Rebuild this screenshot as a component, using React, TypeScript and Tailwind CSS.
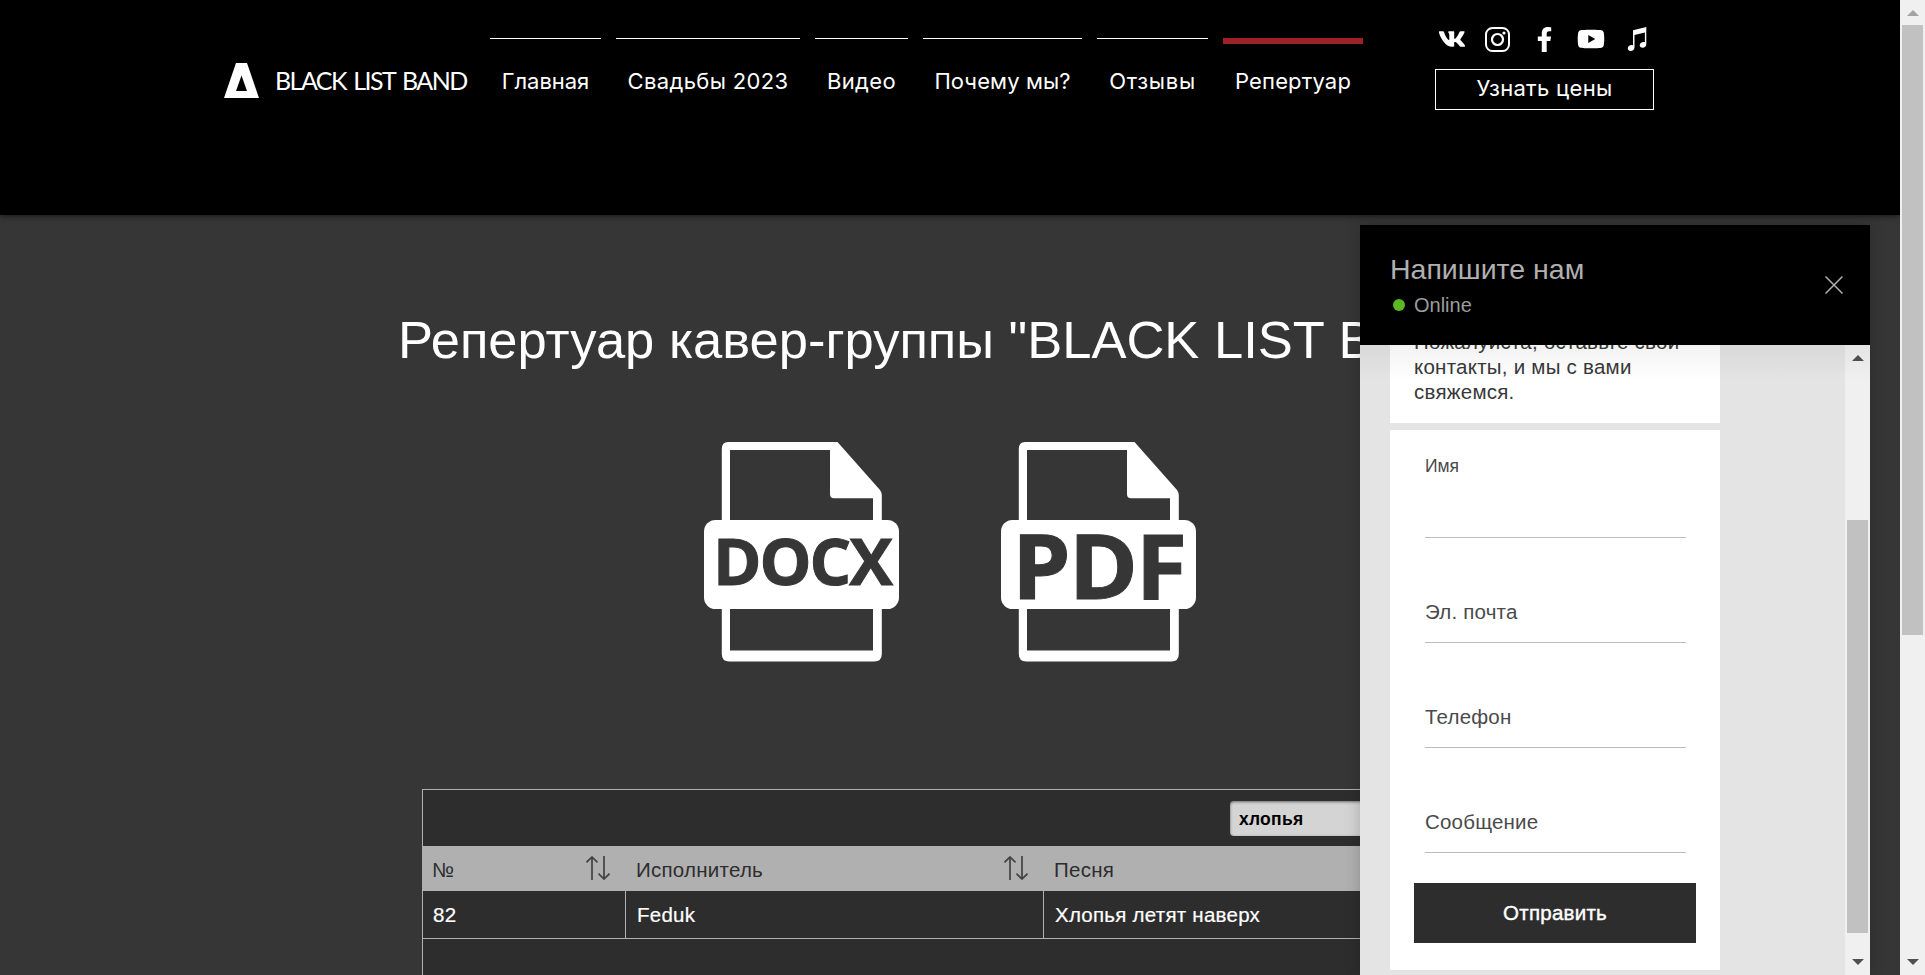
import React from "react";
import { FaFacebookF, FaVk, FaYoutube } from "react-icons/fa";

type NavItem = { label: string; box: string; text: string; active?: boolean };

const NAV: NavItem[] = [
  { label: "Главная", box: "w-[111px]", text: "tracking-[-0.05px]" },
  { label: "Свадьбы 2023", box: "w-[184px]", text: "tracking-[0.35px]" },
  { label: "Видео", box: "w-[93px]", text: "tracking-[0.4px]" },
  { label: "Почему мы?", box: "w-[159px]", text: "tracking-[0.1px]" },
  { label: "Отзывы", box: "w-[111px]", text: "tracking-[0.7px]" },
  { label: "Репертуар", box: "w-[140px]", text: "tracking-[0.15px]", active: true },
];

function Logo() {
  return (
    <svg className="mt-[63px] h-[35px] w-[35px] shrink-0" viewBox="0 0 35 35">
      <path fill="#fff" fillRule="evenodd" d="M12 0h11l12 35H0zM17.5 12.5L12 28h11z" />
    </svg>
  );
}

function InstagramIcon() {
  return (
    <svg className="h-[25px] w-[25px]" viewBox="0 0 25 25" fill="none" stroke="#fff">
      <rect x="1" y="1" width="23" height="23" rx="6.500" strokeWidth="2" />
      <circle cx="12.500" cy="12.500" r="5.500" strokeWidth="2.200" />
      <circle cx="19" cy="6" r="1.600" fill="#fff" stroke="none" />
    </svg>
  );
}

function MusicIcon() {
  return (
    <svg className="h-6 w-[20px]" viewBox="0 0 20 24">
      <path
        fill="#fff"
        d="M6 3.2L19.3 0v17.2c0 2-1.7 3.6-3.7 3.6-1.700 0-2.900-1-2.900-2.500 0-1.900 1.700-3.300 3.700-3.300.6 0 1.100.1 1.500.3V5.600L7.500 8v12.200c0 2.100-1.700 3.700-3.800 3.700-1.700 0-2.900-1-2.900-2.500 0-1.900 1.700-3.300 3.700-3.300.6 0 1.100.1 1.500.3z"
      />
    </svg>
  );
}

function SortIcon() {
  return (
    <svg className="h-6 w-6" viewBox="0 0 24 24" fill="none" stroke="#424242" strokeWidth="1.7">
      <path d="M6 24V1M.5 6.300L6 1l5.500 5.300M18 0v23M12.500 17.700L18 23l5.500-5.300" />
    </svg>
  );
}

function FileIcon({ label, x, y, width, size }: { label: string; x: number; y: number; width: number; size: number }) {
  return (
    <svg className="h-[220px] w-[195px]" viewBox="0 0 195 220">
      <path
        fill="#fff"
        fillRule="evenodd"
        d="M24 0h109.500L176 48q1.800 2.500 1.800 5.500V212q0 7.500-7.500 7.500h-145q-7.500 0-7.500-7.500V7q0-7 6.200-7zM26 8v70h143V56.300h-39q-4 0-4-4V8zM26 167v41.500h143V167z"
      />
      <rect y="78" width="195" height="89" rx="11.500" fill="#fff" />
      <text
        x={x}
        y={y}
        fontSize={size}
        textLength={width}
        lengthAdjust="spacingAndGlyphs"
        letterSpacing="-2"
        fill="#363636"
        stroke="#363636"
        strokeWidth="1"
        fontWeight="700"
        fontFamily="'Open Sans', 'Noto Sans', sans-serif"
      >
        {label}
      </text>
    </svg>
  );
}

function Arrow({ down, muted }: { down?: boolean; muted?: boolean }) {
  return (
    <svg className="h-[6px] w-[12px]" viewBox="0 0 12 6">
      <path fill={muted ? "#a3a3a3" : "#505050"} d={down ? "M0 0h12L6 6z" : "M0 6h12L6 0z"} />
    </svg>
  );
}

function Field({ label, first }: { label: string; first?: boolean }) {
  return first ? (
    <div className="h-[108px] border-b border-[#bdbdbd] pt-[24px]">
      <div className="text-[17.5px] leading-6 text-[#4a4a4a]">{label}</div>
    </div>
  ) : (
    <div className="flex h-[105px] items-end border-b border-[#bdbdbd] pb-[18px]">
      <div className="text-[20.5px] leading-6 tracking-[0.2px] text-[#4a4a4a]">{label}</div>
    </div>
  );
}

function ChatPanel() {
  return (
    <aside className="absolute left-[1360px] top-[225px] flex h-[750px] w-[510px] flex-col shadow-[0_0_15px_rgba(0,0,0,0.2)]">
      <div className="flex h-[120px] shrink-0 justify-between bg-black pl-[30px] pr-[27px] text-[#b0b0b0]">
        <div className="pt-[28px]">
          <div className="text-[28.5px] leading-8">Напишите нам</div>
          <div className="flex items-center pl-[3px] pt-[8px]">
            <span className="h-3 w-3 rounded-full bg-[#5ab923]" />
            <span className="pl-[9px] text-[20px] leading-6 text-[#9c9c9c]">Online</span>
          </div>
        </div>
        <svg className="mt-[51px] h-[18px] w-[18px]" viewBox="0 0 18 18" stroke="#b0b0b0" strokeWidth="1.500">
          <path d="M.5.5l17 17M17.500.5l-17 17" />
        </svg>
      </div>
      <div className="relative flex h-[630px] overflow-hidden bg-[#e4e4e4]">
        <div className="w-[485px] pl-[30px]">
          <div className="h-[78px] w-[330px] overflow-hidden bg-white pl-6">
            <p className="-mt-[16px] whitespace-nowrap text-[20.5px] leading-[25px] tracking-[0.25px] text-[#383838]">
              Пожалуйста, оставьте свои
              <br />
              контакты, и мы с вами
              <br />
              свяжемся.
            </p>
          </div>
          <form className="mt-[7px] h-[540px] w-[330px] bg-white px-6">
            <div className="pl-[11px] pr-[10px]">
              <Field label="Имя" first />
              <Field label="Эл. почта" />
              <Field label="Телефон" />
              <Field label="Сообщение" />
            </div>
            <button
              type="button"
              className="mt-[30px] block h-[60px] w-[282px] bg-[#2d2d2d] text-[20.5px] leading-[60px] tracking-[0.25px] text-white [-webkit-text-stroke:0.4px_#fff]"
            >
              Отправить
            </button>
          </form>
        </div>
        <div className="flex w-[25px] flex-col items-center bg-[#f0f0f0] pt-[10px]">
          <Arrow />
          <div className="mt-[159px] h-[413px] w-[21px] bg-[#c1c1c1]" />
          <div className="mt-[26px] flex">
            <Arrow down />
          </div>
        </div>
        <div className="absolute inset-x-0 top-0 h-9 bg-gradient-to-b from-black/5 to-transparent" />
      </div>
    </aside>
  );
}

export default function App() {
  return (
    <div className="relative flex h-[975px] w-[1925px] overflow-hidden bg-[#363636] font-['Liberation_Sans',Arial,sans-serif]">
      <div className="flex w-[1900px] flex-col">
        <header className="z-10 flex h-[215px] shrink-0 bg-black pl-[224px] text-white shadow-[0_1px_6px_rgba(0,0,0,0.6)]">
          <Logo />
          <div className="w-[231px] whitespace-nowrap pl-[16px] pt-[65px] font-['Lato',sans-serif] text-[25px] leading-[30px] tracking-[-1.55px] [word-spacing:2.5px]">
            BLACK LIST BAND
          </div>
          <nav className="flex gap-[15px] pt-[38px] font-['Inter',sans-serif]">
            {NAV.map((item) => (
              <a key={item.label} className={item.box}>
                <div className={item.active ? "h-[6px] bg-[#9e2126]" : "mb-[5px] h-px bg-white"} />
                <div className={"flex justify-center whitespace-nowrap pt-[22px] text-[22px] leading-[30px] " + item.text}>
                  {item.label}
                </div>
              </a>
            ))}
          </nav>
          <div className="ml-[72px] pt-[27px]">
            <div className="flex h-6 items-center pl-[3px]">
              <FaVk className="h-[28px] w-[28px]" />
              <span className="ml-[19px]">
                <InstagramIcon />
              </span>
              <FaFacebookF className="ml-[22px] h-[25px] w-[25px]" />
              <FaYoutube className="ml-[20px] h-[28px] w-[28px]" />
              <span className="ml-[22px]">
                <MusicIcon />
              </span>
            </div>
            <a className="mt-[18px] flex h-[41px] w-[219px] justify-center border border-white pt-[3px] font-['Inter',sans-serif] text-[22px] leading-[30px] tracking-[0.3px]">
              Узнать цены
            </a>
          </div>
        </header>
        <main className="flex flex-col items-center text-white">
          <h1 className="ml-[1px] mt-[95px] whitespace-nowrap text-[52.5px] leading-[60px]">Репертуар кавер-группы "BLACK LIST BAND"</h1>
          <div className="mt-[72px] flex gap-[102px]">
            <FileIcon label="DOCX" x={9} y={142.5} width={178} size={65} />
            <FileIcon label="PDF" x={11} y={156.5} width={173} size={90} />
          </div>
          <section className="mr-[1px] mt-[127px] w-[1055px] border border-[#b0b0b0] bg-[#2d2d2d] text-[20.5px] tracking-[0.25px]">
            <div className="h-[56px] pl-[807px] pt-[11px]">
              <div className="h-[35px] w-[230px] rounded bg-[#d4d4d4] pl-[9px] text-[17.5px] font-bold leading-[36px] text-black shadow-[inset_0_1px_3px_rgba(0,0,0,0.5)]">
                хлопья
              </div>
            </div>
            <div className="grid h-[45px] grid-cols-[202px_418px_1fr] bg-[#b0b0b0] leading-[47px] text-[#2d2d2d]">
              <div className="flex justify-between pl-[9px] pr-[15px]">
                №
                <span className="pt-[10px]"><SortIcon /></span>
              </div>
              <div className="flex justify-between pl-[11px] pr-[15px]">
                Исполнитель
                <span className="pt-[10px]"><SortIcon /></span>
              </div>
              <div className="pl-[11px]">Песня</div>
            </div>
            <div className="grid h-[48px] grid-cols-[202px_418px_1fr] border-b border-[#b0b0b0] leading-[48px] [-webkit-text-stroke:0.2px_#fff]">
              <div className="pl-[10px]">82</div>
              <div className="border-l border-[#b0b0b0] pl-[11px]">Feduk</div>
              <div className="border-l border-[#b0b0b0] pl-[11px]">Хлопья летят наверх</div>
            </div>
            <div className="h-[200px]" />
          </section>
        </main>
      </div>
      <div className="z-10 flex w-[25px] flex-col items-center bg-[#f0f0f0] pt-[10px]">
        <Arrow muted />
        <div className="mt-[9px] h-[610px] w-[21px] bg-[#c1c1c1]" />
        <div className="mt-[324px] flex">
          <Arrow down />
        </div>
      </div>
      <ChatPanel />
    </div>
  );
}
